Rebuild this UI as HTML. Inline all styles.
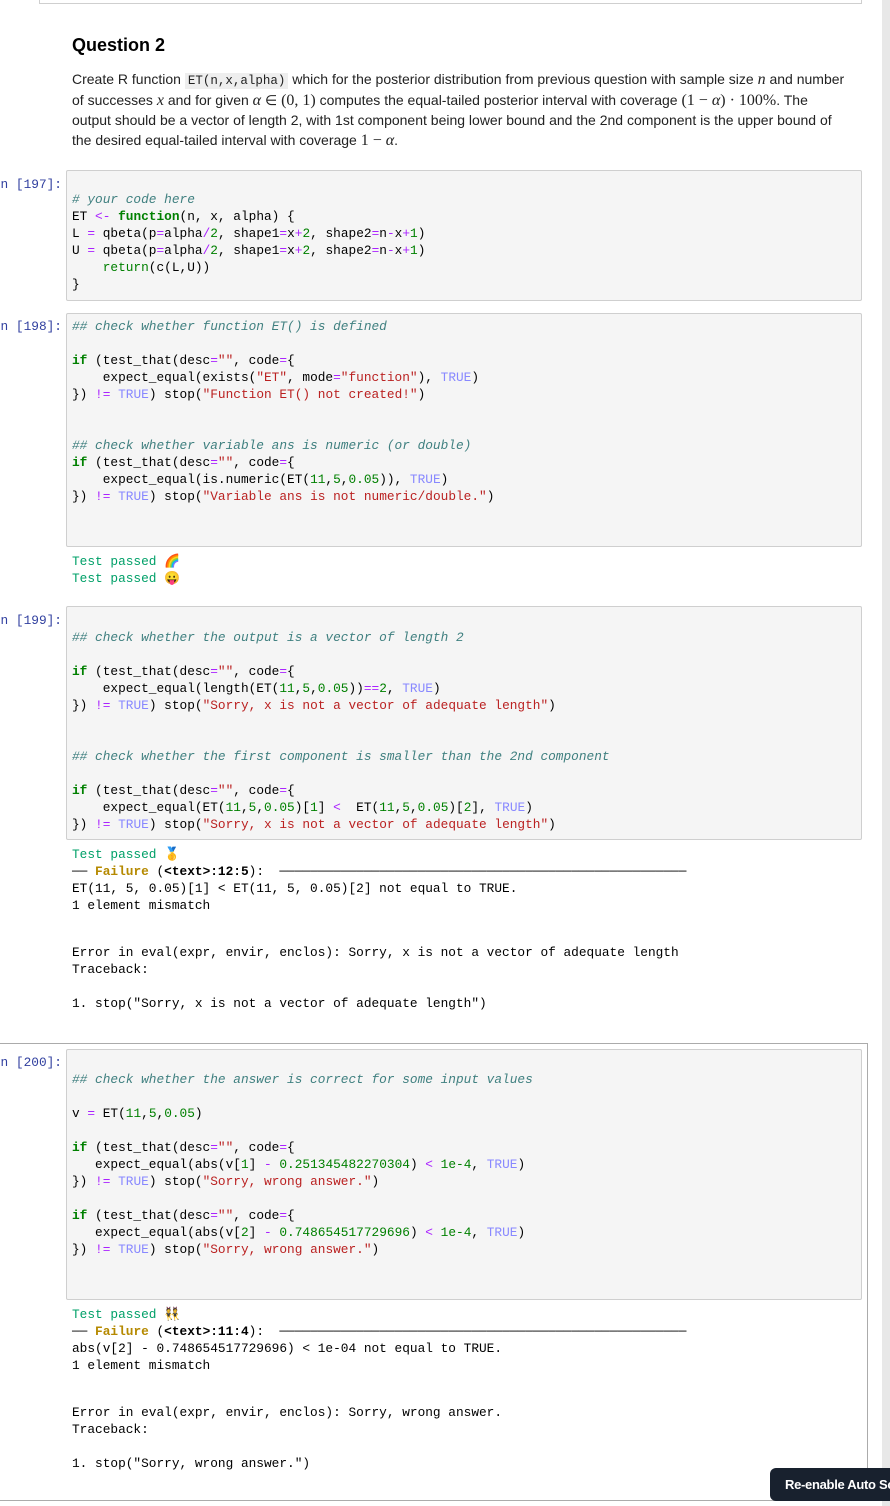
<!DOCTYPE html>
<html><head><meta charset="utf-8"><style>
*{margin:0;padding:0;box-sizing:border-box}
body{width:890px;height:1506px;position:relative;background:#fff;overflow:hidden;font-family:"Liberation Sans",sans-serif;color:#000}
.box{position:absolute;left:66px;width:796px;background:#f5f5f5;border:1px solid #cfcfcf;border-radius:2px}
pre{position:absolute;left:72px;font-family:"Liberation Mono",monospace;font-size:12.8px;line-height:17px;white-space:pre;color:#000}
.p{position:absolute;right:828px;font-family:"Liberation Mono",monospace;font-size:12.8px;color:#303f9f;white-space:pre;line-height:17px}
.c{color:#408080;font-style:italic}
.k{color:#008000;font-weight:bold}
.o{color:#aa22ff}
.t{color:#8888ff}
.s{color:#ba2121}
.n{color:#008000}
.g{color:#00a068}
.f{color:#b58900;font-weight:bold}
.ml{position:absolute;left:72px;font-size:14px;height:20px;line-height:20px;color:#222;white-space:nowrap}
.m{font-family:'Liberation Serif',serif;font-size:16px}
code{font-family:"Liberation Mono",monospace;font-size:12.5px;background:#eee;padding:1px 3px}
</style></head><body>
<div style="position:absolute;left:39px;top:-10px;width:823px;height:14px;border:1px solid #cfcfcf;border-top:none"></div>
<div style="position:absolute;left:882px;top:0;width:8px;height:1506px;background:#e8e8e8"></div>

<div style="position:absolute;left:72px;top:35px;font-size:18px;font-weight:bold">Question 2</div>
<div class="ml" style="top:69px">Create R function <code>ET(n,x,alpha)</code> which for the posterior distribution from previous question with sample size <i class="m">n</i> and number</div>
<div class="ml" style="top:90px">of successes <i class="m">x</i> and for given <i class="m">α</i> ∈ <span class="m">(0, 1)</span> computes the equal-tailed posterior interval with coverage <span class="m">(1 − <i>α</i>) · 100%</span>. The</div>
<div class="ml" style="top:110px">output should be a vector of length 2, with 1st component being lower bound and the 2nd component is the upper bound of</div>
<div class="ml" style="top:130px">the desired equal-tailed interval with coverage <span class="m">1 − <i>α</i></span>.</div>

<div class="p" style="top:176px">In [197]:</div>
<div class="box" style="top:170px;height:131px"></div>
<pre style="top:174px">

<span class="c"># your code here</span>
ET <span class="o">&lt;-</span> <span class="k">function</span>(n, x, alpha) {
L <span class="o">=</span> qbeta(p<span class="o">=</span>alpha<span class="o">/</span><span class="n">2</span>, shape1<span class="o">=</span>x<span class="o">+</span><span class="n">2</span>, shape2<span class="o">=</span>n<span class="o">-</span>x<span class="o">+</span><span class="n">1</span>)
U <span class="o">=</span> qbeta(p<span class="o">=</span>alpha<span class="o">/</span><span class="n">2</span>, shape1<span class="o">=</span>x<span class="o">+</span><span class="n">2</span>, shape2<span class="o">=</span>n<span class="o">-</span>x<span class="o">+</span><span class="n">1</span>)
    <span class="k" style="font-weight:normal">return</span>(c(L,U))
}</pre>

<div class="p" style="top:318px">In [198]:</div>
<div class="box" style="top:313px;height:234px"></div>
<pre style="top:318px"><span class="c">## check whether function ET() is defined</span>

<span class="k">if</span> (test_that(desc<span class="o">=</span><span class="s">""</span>, code<span class="o">=</span>{
    expect_equal(exists(<span class="s">"ET"</span>, mode<span class="o">=</span><span class="s">"function"</span>), <span class="t">TRUE</span>)
}) <span class="o">!=</span> <span class="t">TRUE</span>) stop(<span class="s">"Function ET() not created!"</span>)


<span class="c">## check whether variable ans is numeric (or double)</span>
<span class="k">if</span> (test_that(desc<span class="o">=</span><span class="s">""</span>, code<span class="o">=</span>{
    expect_equal(is.numeric(ET(<span class="n">11</span>,<span class="n">5</span>,<span class="n">0.05</span>)), <span class="t">TRUE</span>)
}) <span class="o">!=</span> <span class="t">TRUE</span>) stop(<span class="s">"Variable ans is not numeric/double."</span>)</pre>
<pre style="top:553px"><span class="g">Test passed</span> 🌈
<span class="g">Test passed</span> 😛</pre>

<div class="p" style="top:612px">In [199]:</div>
<div class="box" style="top:606px;height:234px"></div>
<pre style="top:612px">

<span class="c">## check whether the output is a vector of length 2</span>

<span class="k">if</span> (test_that(desc<span class="o">=</span><span class="s">""</span>, code<span class="o">=</span>{
    expect_equal(length(ET(<span class="n">11</span>,<span class="n">5</span>,<span class="n">0.05</span>))<span class="o">==</span><span class="n">2</span>, <span class="t">TRUE</span>)
}) <span class="o">!=</span> <span class="t">TRUE</span>) stop(<span class="s">"Sorry, x is not a vector of adequate length"</span>)


<span class="c">## check whether the first component is smaller than the 2nd component</span>

<span class="k">if</span> (test_that(desc<span class="o">=</span><span class="s">""</span>, code<span class="o">=</span>{
    expect_equal(ET(<span class="n">11</span>,<span class="n">5</span>,<span class="n">0.05</span>)[<span class="n">1</span>] <span class="o">&lt;</span>  ET(<span class="n">11</span>,<span class="n">5</span>,<span class="n">0.05</span>)[<span class="n">2</span>], <span class="t">TRUE</span>)
}) <span class="o">!=</span> <span class="t">TRUE</span>) stop(<span class="s">"Sorry, x is not a vector of adequate length"</span>)</pre>
<pre style="top:846px"><span class="g">Test passed</span> 🥇
── <span class="f">Failure</span> (<b>&lt;text&gt;:12:5</b>):  ─────────────────────────────────────────────────────
ET(11, 5, 0.05)[1] &lt; ET(11, 5, 0.05)[2] not equal to TRUE.
1 element mismatch
</pre>
<pre style="top:944px">Error in eval(expr, envir, enclos): Sorry, x is not a vector of adequate length
Traceback:

1. stop("Sorry, x is not a vector of adequate length")</pre>

<div style="position:absolute;left:-2px;top:1043px;width:870px;height:458px;border:1px solid #ababab"></div>
<div class="p" style="top:1054px">In [200]:</div>
<div class="box" style="top:1049px;height:251px"></div>
<pre style="top:1054px">

<span class="c">## check whether the answer is correct for some input values</span>

v <span class="o">=</span> ET(<span class="n">11</span>,<span class="n">5</span>,<span class="n">0.05</span>)

<span class="k">if</span> (test_that(desc<span class="o">=</span><span class="s">""</span>, code<span class="o">=</span>{
   expect_equal(abs(v[<span class="n">1</span>] <span class="o">-</span> <span class="n">0.251345482270304</span>) <span class="o">&lt;</span> <span class="n">1e-4</span>, <span class="t">TRUE</span>)
}) <span class="o">!=</span> <span class="t">TRUE</span>) stop(<span class="s">"Sorry, wrong answer."</span>)

<span class="k">if</span> (test_that(desc<span class="o">=</span><span class="s">""</span>, code<span class="o">=</span>{
   expect_equal(abs(v[<span class="n">2</span>] <span class="o">-</span> <span class="n">0.748654517729696</span>) <span class="o">&lt;</span> <span class="n">1e-4</span>, <span class="t">TRUE</span>)
}) <span class="o">!=</span> <span class="t">TRUE</span>) stop(<span class="s">"Sorry, wrong answer."</span>)</pre>
<pre style="top:1306px"><span class="g">Test passed</span> 👯
── <span class="f">Failure</span> (<b>&lt;text&gt;:11:4</b>):  ─────────────────────────────────────────────────────
abs(v[2] - 0.748654517729696) &lt; 1e-04 not equal to TRUE.
1 element mismatch
</pre>
<pre style="top:1404px">Error in eval(expr, envir, enclos): Sorry, wrong answer.
Traceback:

1. stop("Sorry, wrong answer.")</pre>

<div style="position:absolute;left:770px;top:1468px;width:130px;height:33px;background:#18212e;border-radius:6px;color:#fff;font-weight:bold;font-size:13px;line-height:33px;padding-left:15px;white-space:nowrap;letter-spacing:-0.3px">Re-enable Auto Scroll</div>
</body></html>
